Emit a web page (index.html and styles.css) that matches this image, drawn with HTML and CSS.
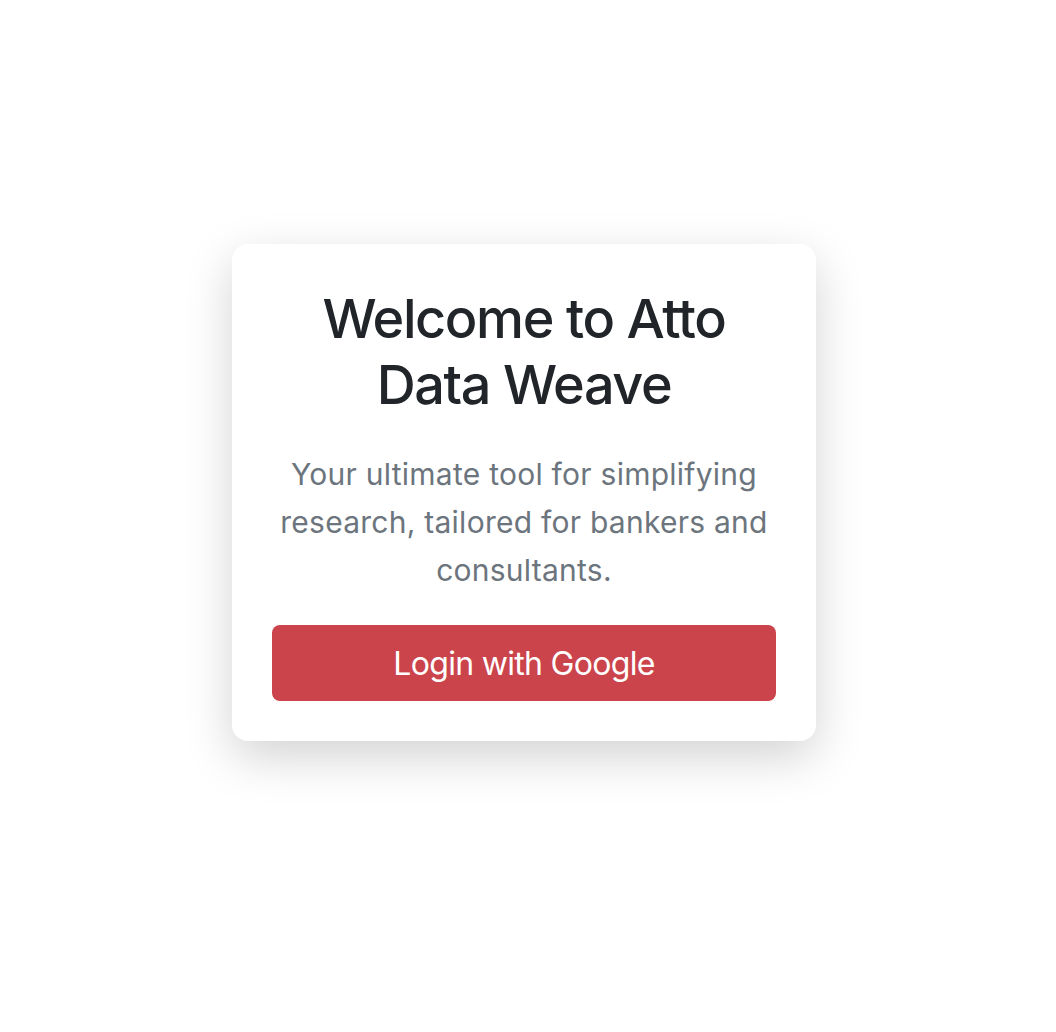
FILE: index.html
```html
<!DOCTYPE html>
<html lang="en">
<head>
<meta charset="utf-8">
<title>Atto Data Weave</title>
<link rel="stylesheet" href="styles.css">
</head>
<body>
<main class="page">
  <section class="card">
    <h1 class="title">Welcome to Atto Data Weave</h1>
    <p class="lead">Your ultimate tool for simplifying research, tailored for bankers and consultants.</p>
    <button class="btn-google" type="button">Login with Google</button>
  </section>
</main>
</body>
</html>
```

FILE: styles.css
```css
* { box-sizing: border-box; }
html, body { margin: 0; padding: 0; background: #ffffff; }
body {
  font-family: Inter, "Noto Sans", "Liberation Sans", sans-serif;
  -webkit-font-smoothing: antialiased;
}
.page {
  display: flex;
  justify-content: center;
  align-items: flex-start;
  min-height: 100vh;
  padding: 244px 8px 0 0;
}
.card {
  width: 584px;
  background: #ffffff;
  border-radius: 16px;
  box-shadow: 0 16px 48px rgba(0, 0, 0, 0.175);
  padding: 42px 40px 40px;
  display: flex;
  flex-direction: column;
  align-items: stretch;
  text-align: center;
}
.title {
  margin: 0;
  font-size: 54px;
  line-height: 66px;
  font-weight: 550;
  color: #212529;
  letter-spacing: -1.4px;
}
.lead {
  margin: 32px 0 31px;
  font-size: 30px;
  line-height: 48px;
  font-weight: 400;
  color: #6c757d;
  letter-spacing: 0.25px;
}
.btn-google {
  height: 76px;
  border: none;
  border-radius: 8px;
  background: #cb444b;
  color: #ffffff;
  font-family: inherit;
  font-size: 32px;
  font-weight: 400;
  letter-spacing: -0.7px;
  cursor: pointer;
}
```
